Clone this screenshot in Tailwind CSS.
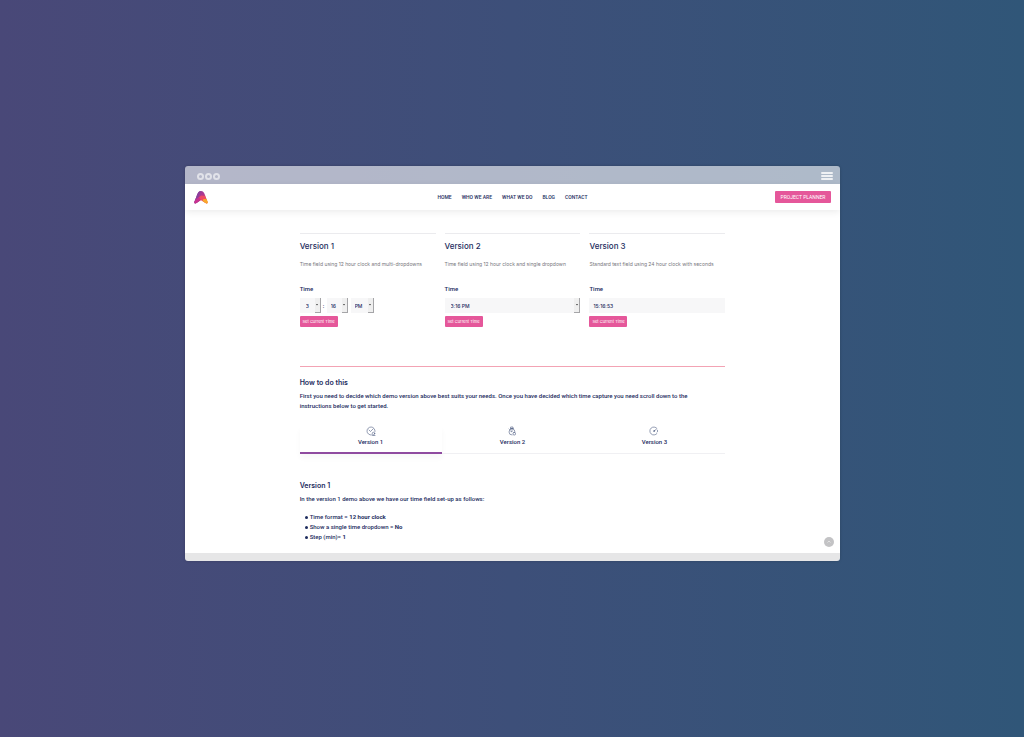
<!DOCTYPE html>
<html lang="en">
<head>
<meta charset="utf-8">
<meta name="viewport" content="width=device-width, initial-scale=1">
<title>Time field versions</title>
<script src="https://cdn.jsdelivr.net/npm/@tailwindcss/browser@4"></script>
</head>
<body class="flex min-h-screen flex-col items-center bg-linear-to-r from-[#494878] via-[#3d4f79] to-[#305678] pt-[166px] pr-4 pb-8 pl-[17px] font-[Inter,sans-serif] text-[5px] leading-[10px] font-medium text-[#1d2c5e]">
<div class="w-full max-w-[655px] overflow-hidden rounded-[3px] shadow-[0_0_3px_rgba(0,0,0,0.2)]">
  <!-- Browser frame -->
  <div class="flex h-[18px] items-center justify-between bg-white/60 pr-[7px] pl-3">
    <div class="flex gap-px pt-[2px]">
      <span class="size-[7px] rounded-full border-2 border-white/60"></span>
      <span class="size-[7px] rounded-full border-2 border-white/60"></span>
      <span class="size-[7px] rounded-full border-2 border-white/60"></span>
    </div>
    <button type="button" aria-label="Menu" class="flex w-3 flex-col gap-px pt-px">
      <span class="h-[2px] w-full rounded-full bg-white/80"></span>
      <span class="h-[2px] w-full rounded-full bg-white/80"></span>
      <span class="h-[2px] w-full rounded-full bg-white/80"></span>
    </button>
  </div>

  <div class="relative bg-white">
    <header class="grid h-[26px] grid-cols-[1fr_auto_1fr] items-center pr-[9px] pl-[9px] font-[Roboto,sans-serif] shadow-[0_2px_7px_rgba(0,0,0,0.08)]">
      <a href="#" aria-label="Home page" class="justify-self-start">
        <svg class="h-[13px] w-[14px]" viewBox="0 0 28 26">
          <defs>
            <linearGradient id="wing" x1="0" y1="0" x2="1" y2="1"><stop offset="0" stop-color="#7b3fa0"/><stop offset=".5" stop-color="#b5368f"/><stop offset="1" stop-color="#f4a62a"/></linearGradient>
          </defs>
          <path d="M14 0C18 0 20 3 22 8L27 21C28 25 26 26 23 24L14 18L5 24C2 26 0 25 1 21L6 8C8 3 10 0 14 0Z" fill="url(#wing)"/>
          <path d="M14 0C10 0 8 3 6 8L1 21C0 25 2 26 5 24L10 20C8 14 9 6 14 0Z" fill="#8b3f9c"/>
          <path d="M1 21C0 25 2 26 5 24L14 18L10 12C6 14 3 18 1 21Z" fill="#c8318f"/>
          <path d="M14 9L22 10L26 20C28 25 26 26 23 24L14 18L10 13Z" fill="#ef4b62"/>
          <path d="M19 16L25 16L27 21C28 25 26 26 23 24L17 20Z" fill="#f9a92b"/>
        </svg>
      </a>
      <nav class="flex gap-[10px]">
        <a href="#">HOME</a>
        <a href="#">WHO WE ARE</a>
        <a href="#">WHAT WE DO</a>
        <a href="#">BLOG</a>
        <a href="#">CONTACT</a>
      </nav>
      <button type="button" class="h-3 w-14 justify-self-end rounded-[1px] bg-[#e5579a] font-normal text-white">PROJECT PLANNER</button>
    </header>

    <main class="mx-auto w-[65%] pt-[23px] pb-[11px]">
      <div class="grid grid-cols-3 gap-[9px]">
        <section class="border-t border-[#ebebee]">
          <h2 class="mt-[6px] text-[8px] leading-3">Version 1</h2>
          <p class="mt-[7px] font-normal whitespace-nowrap text-[#77777d]">Time field using 12 hour clock and multi-dropdowns</p>
          <label for="hour" class="mt-[15px] block font-[Roboto,sans-serif] text-[6px]">Time</label>
          <div class="mt-1 flex items-center">
            <div class="relative">
              <select id="hour" class="block h-[15px] w-[21px] appearance-none bg-[#f7f7f8] pl-[6px]"><option>3</option></select>
              <span class="pointer-events-none absolute inset-y-0 right-0 flex w-[6px] items-center justify-center border-r border-b border-[#a5a5a8] bg-[#efefef]"><svg class="w-[2px]" viewBox="0 0 4 3"><path d="M0 0H4L2 3Z" fill="#333"/></svg></span>
            </div>
            <span class="w-[6px] text-center">:</span>
            <div class="relative">
              <select aria-label="Minutes" class="block h-[15px] w-[21px] appearance-none bg-[#f7f7f8] pl-1"><option>16</option></select>
              <span class="pointer-events-none absolute inset-y-0 right-0 flex w-[6px] items-center justify-center border-r border-b border-[#a5a5a8] bg-[#efefef]"><svg class="w-[2px]" viewBox="0 0 4 3"><path d="M0 0H4L2 3Z" fill="#333"/></svg></span>
            </div>
            <div class="relative ml-[3px]">
              <select aria-label="AM or PM" class="block h-[15px] w-[23px] appearance-none bg-[#f7f7f8] pl-1"><option>PM</option></select>
              <span class="pointer-events-none absolute inset-y-0 right-0 flex w-[6px] items-center justify-center border-r border-b border-[#a5a5a8] bg-[#efefef]"><svg class="w-[2px]" viewBox="0 0 4 3"><path d="M0 0H4L2 3Z" fill="#333"/></svg></span>
            </div>
          </div>
          <button type="button" class="mt-[3px] block h-[11px] w-[38px] rounded-[1px] bg-[#e5579a] text-[4px] font-normal text-white">Set Current Time</button>
        </section>

        <section class="border-t border-[#ebebee]">
          <h2 class="mt-[6px] text-[8px] leading-3">Version 2</h2>
          <p class="mt-[7px] font-normal whitespace-nowrap text-[#77777d]">Time field using 12 hour clock and single dropdown</p>
          <label for="time2" class="mt-[15px] block font-[Roboto,sans-serif] text-[6px]">Time</label>
          <div class="relative mt-1">
            <select id="time2" class="block h-[15px] w-full appearance-none bg-[#f7f7f8] pl-[6px]"><option>3:16 PM</option></select>
            <span class="pointer-events-none absolute inset-y-0 right-0 flex w-[6px] items-center justify-center border-r border-b border-[#a5a5a8] bg-[#efefef]"><svg class="w-[2px]" viewBox="0 0 4 3"><path d="M0 0H4L2 3Z" fill="#333"/></svg></span>
          </div>
          <button type="button" class="mt-[3px] block h-[11px] w-[38px] rounded-[1px] bg-[#e5579a] text-[4px] font-normal text-white">Set Current Time</button>
        </section>

        <section class="border-t border-[#ebebee]">
          <h2 class="mt-[6px] text-[8px] leading-3">Version 3</h2>
          <p class="mt-[7px] font-normal whitespace-nowrap text-[#77777d]">Standard text field using 24 hour clock with seconds</p>
          <label for="time3" class="mt-[15px] block font-[Roboto,sans-serif] text-[6px]">Time</label>
          <input id="time3" type="text" value="15:16:53" class="mt-1 block h-[15px] w-full bg-[#f7f7f8] px-1">
          <button type="button" class="mt-[3px] block h-[11px] w-[38px] rounded-[1px] bg-[#e5579a] text-[4px] font-normal text-white">Set Current Time</button>
        </section>
      </div>

      <section class="mt-[39px] border-t border-[#f3a3b4] font-[Roboto,sans-serif] text-[6px]">
        <h3 class="mt-[11px] font-[Inter,sans-serif] text-[7px] font-semibold">How to do this</h3>
        <p class="mt-[3px] pr-6">First you need to decide which demo version above best suits your needs. Once you have decided which time capture you need scroll down to the instructions below to get started.</p>

        <div role="tablist" class="mt-[15px] grid grid-cols-3">
          <button type="button" role="tab" aria-selected="true" class="flex flex-col items-center gap-px border-b-2 border-[#8f4ba0] pb-[5px] shadow-[0_4px_6px_rgba(0,0,0,0.03)]">
            <svg class="size-[10px]" viewBox="0 0 20 20" fill="none" stroke="#4d5c82" stroke-width="1.2" stroke-linecap="round"><path d="M18 11A8 8 0 1 0 11 18"/><path d="M6 8L9 11L14 6"/><circle cx="15" cy="15" r="2.5"/><path d="M13 19H18"/></svg>
            <span>Version 1</span>
          </button>
          <button type="button" role="tab" aria-selected="false" class="flex flex-col items-center gap-px border-b border-[#f0f0f3] pb-[6px]">
            <svg class="size-[10px]" viewBox="0 0 20 20" fill="none" stroke="#4d5c82" stroke-width="1.2" stroke-linecap="round"><path d="M8 2H12V5H8ZM7 5H13"/><path d="M16 12A6 6 0 1 0 10 18"/><path d="M10 9V12L7 10M4 6L5 7"/><rect x="12" y="13" width="5" height="5" rx="2"/></svg>
            <span>Version 2</span>
          </button>
          <button type="button" role="tab" aria-selected="false" class="flex flex-col items-center gap-px border-b border-[#f0f0f3] pb-[6px]">
            <svg class="size-[10px]" viewBox="0 0 20 20" fill="none" stroke="#4d5c82" stroke-width="1.2" stroke-linecap="round"><path d="M16 5A8 8 0 1 0 16 15"/><path d="M10 10L14 7M16 8L18 10L16 12"/><circle cx="10" cy="10" r="1"/></svg>
            <span>Version 3</span>
          </button>
        </div>

        <h3 class="mt-[27px] font-[Inter,sans-serif] text-[7px] font-semibold">Version 1</h3>
        <p class="mt-[3px]">In the version 1 demo above we have our time field set-up as follows:</p>
        <ul class="mt-2 pl-[5px]">
          <li class="flex items-center gap-[2px]"><span class="size-[3px] rounded-full bg-[#1d2c5e]"></span><span>Time format = <b>12 hour clock</b></span></li>
          <li class="flex items-center gap-[2px]"><span class="size-[3px] rounded-full bg-[#1d2c5e]"></span><span>Show a single time dropdown = <b>No</b></span></li>
          <li class="flex items-center gap-[2px]"><span class="size-[3px] rounded-full bg-[#1d2c5e]"></span><span>Step (min)= <b>1</b></span></li>
        </ul>
      </section>
    </main>

    <button type="button" aria-label="Back to top" class="absolute right-[6px] bottom-[6px] flex size-[10px] items-center justify-center rounded-full bg-[#c3c3c5]">
      <svg class="size-1" viewBox="0 0 8 8" fill="none" stroke="#fff" stroke-width="1"><path d="M1 5L4 2L7 5"/></svg>
    </button>
  </div>
  <div class="h-2 bg-[#e6e6e7]"></div>
</div>
</body>
</html>
